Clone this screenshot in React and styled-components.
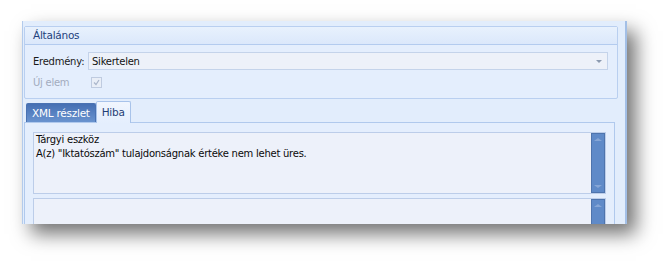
import React from "react";
import styled, { createGlobalStyle } from "styled-components";

const GlobalStyle = createGlobalStyle`
  body {
    margin: 0;
    background: #ffffff;
    font-family: "DejaVu Sans", Tahoma, sans-serif;
    font-size: 10px;
    letter-spacing: -0.25px;
  }
`;

const Page = styled.div`
  padding: 21px 0 0 22px;
  height: 266px;
  box-sizing: border-box;
`;

const Window = styled.div`
  width: 605px;
  height: 203px;
  box-sizing: border-box;
  background: #e2edfc;
  border-left: 1px solid #b3cbec;
  border-right: 2px solid #a3bfe6;
  box-shadow: 9px 10px 18px rgba(0, 0, 0, 0.55);
  padding: 5px 0 0 1px;
  overflow: hidden;
`;

const Group = styled.div`
  width: 594px;
  height: 73px;
  box-sizing: border-box;
  border: 1px solid #b9cff0;
  border-radius: 2px;
  background: #e4eefd;
`;

const GroupHeader = styled.div`
  height: 18px;
  box-sizing: border-box;
  border-bottom: 1px solid #b3cbef;
  background: linear-gradient(#e8f1fd, #dbe8fb);
  color: #23427c;
  padding-left: 8px;
  line-height: 17px;
  font-size: 10.5px;
`;

const GroupBody = styled.div`
  padding: 7px 9px 0 8px;
  display: flex;
  flex-direction: column;
  gap: 3px;
`;

const Row = styled.div`
  display: flex;
  align-items: center;
  height: 18px;
`;

const Label = styled.span`
  width: 55px;
  white-space: nowrap;
  color: ${p => (p.disabled ? "#a2abbd" : "#1a1a1a")};
`;

const Select = styled.div`
  flex: 1;
  height: 18px;
  box-sizing: border-box;
  border: 1px solid #c4d3ea;
  background: #edf1f9;
  display: flex;
  align-items: center;
  justify-content: space-between;
  padding: 0 5px 0 3px;
  color: #111;
`;

const Arrow = styled.span`
  width: 0;
  height: 0;
  border-left: 3px solid transparent;
  border-right: 3px solid transparent;
  border-top: 3px solid #8c9ab0;
`;

const Check = styled.span`
  margin-left: 3px;
  width: 9px;
  height: 9px;
  border: 1px solid #bfcbe0;
  background: #e9eef7;
  display: flex;
  align-items: center;
  justify-content: center;
`;

const Tabs = styled.div`
  display: flex;
  align-items: flex-end;
  height: 22px;
  margin-top: 1px;
  padding-left: 2px;
`;

const Tab = styled.div`
  box-sizing: border-box;
  padding: 0 5px;
  font-size: 10.5px;
  color: ${p => (p.active ? "#1f3e76" : "#ffffff")};
  background: ${p =>
    p.active
      ? "linear-gradient(#f1f6fe, #e4eefd)"
      : "linear-gradient(#456fb3, #6993cf)"};
  border: 1px solid ${p => (p.active ? "#a8c3ea" : "#4a72b2")};
  border-bottom: none;
  border-radius: 2px 2px 0 0;
  height: ${p => (p.active ? "22px" : "19px")};
  line-height: ${p => (p.active ? "21px" : "18px")};
  margin-bottom: ${p => (p.active ? "-1px" : "0")};
  position: relative;
  z-index: ${p => (p.active ? 1 : 0)};
`;

const TabPanel = styled.div`
  width: 591px;
  box-sizing: border-box;
  border: 1px solid #b0c9ed;
  border-bottom: none;
  padding: 9px 8px 0 8px;
  display: flex;
  flex-direction: column;
  gap: 4px;
  background: #e4eefd;
`;

const TextArea = styled.div`
  height: ${p => p.h}px;
  box-sizing: border-box;
  border: 1px solid #bccde9;
  background: #edf1fa;
  display: flex;
`;

const TextBody = styled.div`
  flex: 1;
  padding: 0 2px;
  color: #0a0a0a;
  line-height: 14px;
`;

const ScrollBar = styled.div`
  width: 14px;
  background: #5f8ac8;
  border: 1px solid #4e74ad;
  box-sizing: border-box;
  display: flex;
  flex-direction: column;
  justify-content: space-between;
  align-items: center;
  padding: 4px 0;
`;

const ScrollArrow = styled.span`
  width: 0;
  height: 0;
  border-left: 4px solid transparent;
  border-right: 4px solid transparent;
  ${p =>
    p.down
      ? "border-top: 3px solid #86a6d6;"
      : "border-bottom: 3px solid #86a6d6;"}
`;

export default function App() {
  return (
    <Page>
      <GlobalStyle />
      <Window>
        <Group>
          <GroupHeader>Általános</GroupHeader>
          <GroupBody>
            <Row>
              <Label>Eredmény:</Label>
              <Select>
                Sikertelen
                <Arrow />
              </Select>
            </Row>
            <Row>
              <Label disabled>Új elem</Label>
              <Check>
                <svg width="7" height="7" viewBox="0 0 7 7">
                  <path d="M1 3.5 L3 5.5 L6 1" fill="none" stroke="#a9b5ca" strokeWidth="1.2" />
                </svg>
              </Check>
            </Row>
          </GroupBody>
        </Group>
        <Tabs>
          <Tab>XML részlet</Tab>
          <Tab active>Hiba</Tab>
        </Tabs>
        <TabPanel>
          <TextArea h={62}>
            <TextBody>
              Tárgyi eszköz
              <br />
              A(z) "Iktatószám" tulajdonságnak értéke nem lehet üres.
            </TextBody>
            <ScrollBar>
              <ScrollArrow />
              <ScrollArrow down />
            </ScrollBar>
          </TextArea>
          <TextArea h={62}>
            <TextBody />
            <ScrollBar>
              <ScrollArrow />
              <ScrollArrow down />
            </ScrollBar>
          </TextArea>
        </TabPanel>
      </Window>
    </Page>
  );
}
